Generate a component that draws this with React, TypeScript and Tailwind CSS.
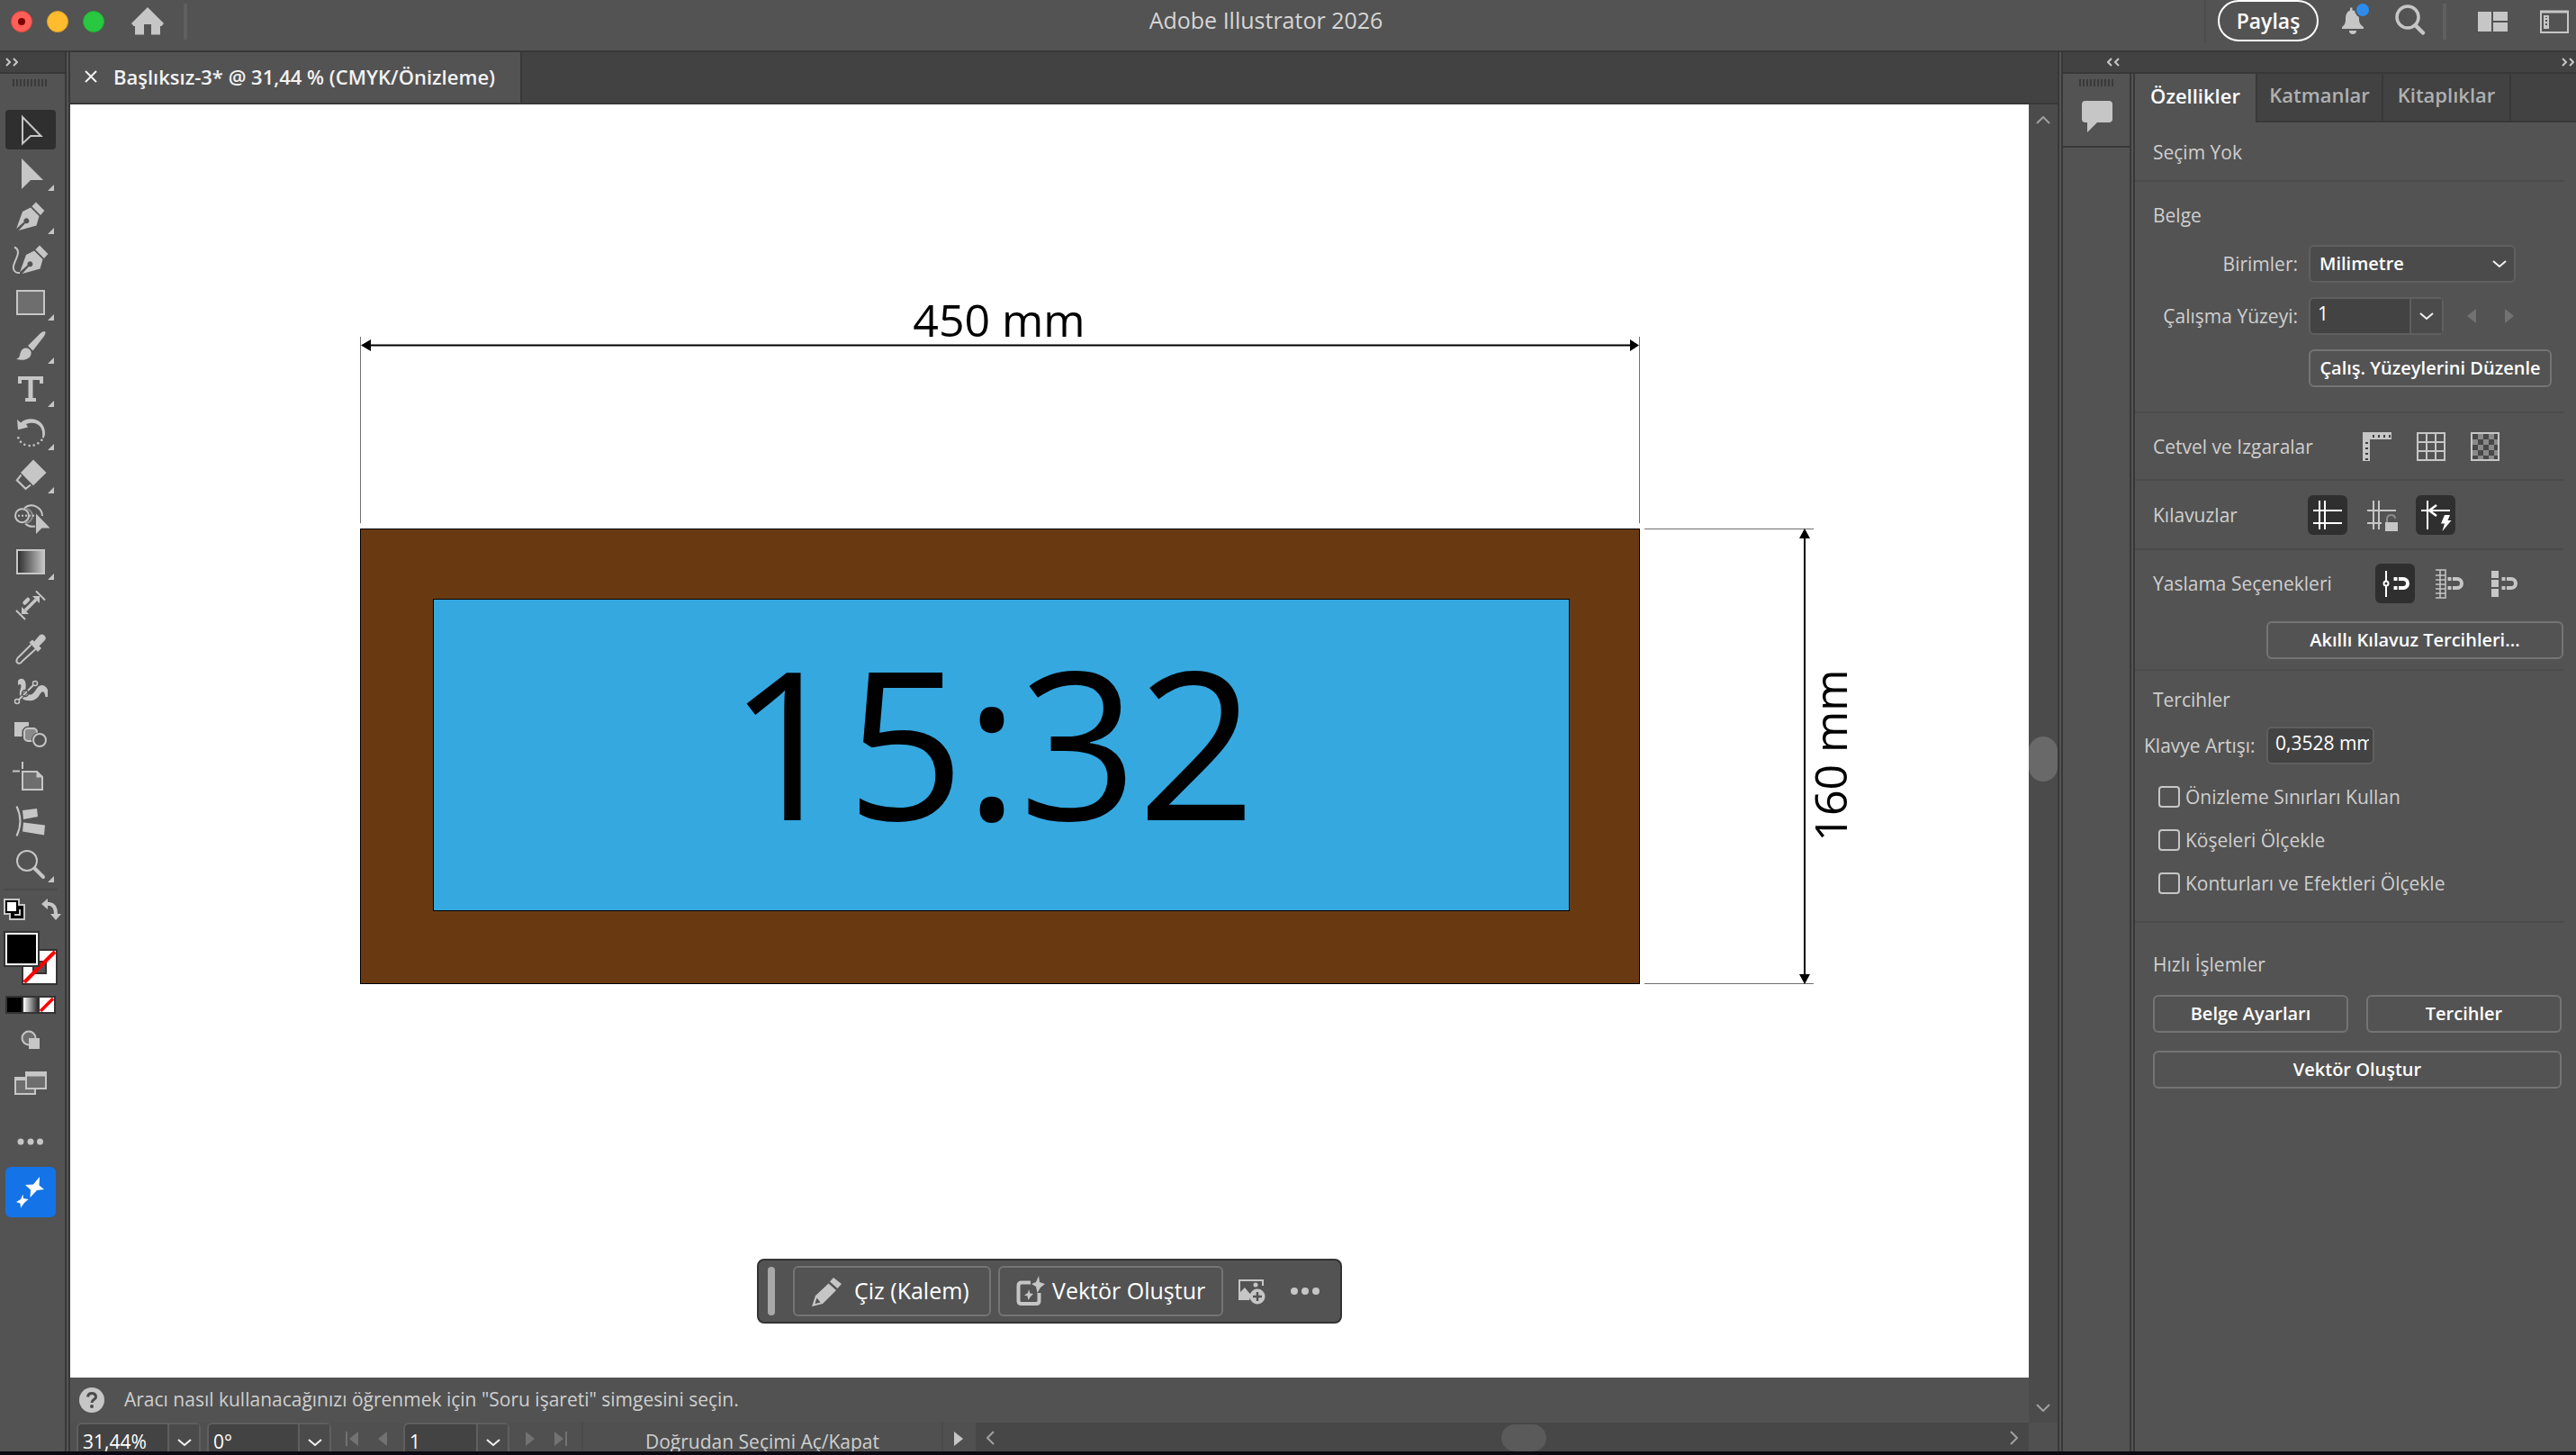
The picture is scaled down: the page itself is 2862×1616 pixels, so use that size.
import type { ReactNode } from 'react';

type Tool = { name: string; icon: ReactNode; more?: boolean; active?: boolean };

// every icon is drawn in the 72x48 cell of its button
const tools: Tool[] = [
  {
    name: 'Seçim',
    active: true,
    icon: <path d="M25 10V39.5L34 31H45.5Z" fill="none" stroke="#c6c6c6" strokeWidth="2" />,
  },
  { name: 'Doğrudan Seçim', more: true, icon: <path d="M24 8V42L34 32H48Z" /> },
  {
    name: 'Kalem',
    more: true,
    icon: (
      <g>
        <path d="M40 8.5 49.3 18 45 23 35.3 13.3Z" />
        <path d="M34 14.5 43.5 24 40.5 34.5 20.7 40 28 32A3 3 0 1 0 26.6 30.4L18.2 38 25 19Z" />
      </g>
    ),
  },
  {
    name: 'Eğrilik',
    icon: (
      <g>
        <path d="M44 8.5 53.3 18 49 23 39.3 13.3Z" />
        <path d="M38 14.5 47.5 24 44.5 34.5 24.7 40 32 32A3 3 0 1 0 30.6 30.4L22.2 38 29 19Z" />
        <path d="M16 10.5C26 15 14 27 14.8 33.5 15.4 38 18 39.4 22 39" fill="none" stroke="#c6c6c6" strokeWidth="2" />
      </g>
    ),
  },
  {
    name: 'Dikdörtgen',
    more: true,
    icon: <rect x="19" y="11" width="30" height="26" fill="#6e6e6e" stroke="#c6c6c6" strokeWidth="2" />,
  },
  {
    name: 'Boya Fırçası',
    more: true,
    icon: (
      <g>
        <path d="M49 8C51.5 8.2 50.5 11 48.5 14L36.5 29.5 31 24 44 11C46 9 47.5 8 49 8Z" />
        <path d="M29 26.5C33 27 35.5 30 34.5 33.5 33 40 24 41 18 38.8 22.5 37.5 21.5 34.5 23 31 24 28 26 26.5 29 26.5Z" />
      </g>
    ),
  },
  { name: 'Metin', more: true, icon: <path d="M20 10H48V18H44V14H36.5V34H40V38H28V34H31.5V14H24V18H20Z" /> },
  {
    name: 'Döndür',
    more: true,
    icon: (
      <g>
        <path d="M19 10 23 13.5C33 5 50 10 50 25 50 28 49 29.5 48.5 30.5L47 30C49 18 41 10.5 29 15L31 18.5 20 21.3Z" />
        <circle cx="20.3" cy="30.3" r="1.3" />
        <circle cx="23" cy="34.7" r="1.3" />
        <circle cx="27.3" cy="37.7" r="1.3" />
        <circle cx="32.7" cy="39" r="1.3" />
        <circle cx="37.7" cy="38.5" r="1.3" />
        <circle cx="42.3" cy="36.3" r="1.3" />
        <circle cx="46.3" cy="32.7" r="1.3" />
      </g>
    ),
  },
  {
    name: 'Silgi',
    more: true,
    icon: (
      <g>
        <path d="M37 6.5 51.5 21 37 35.2 23 21Z" />
        <path d="M23.5 23.5 18.8 29.3 28.5 38.8 34 34.5" fill="none" stroke="#c6c6c6" strokeWidth="2" />
      </g>
    ),
  },
  {
    name: 'Şekil Oluşturucu',
    icon: (
      <g>
        <circle cx="24.5" cy="20.7" r="7.5" fill="none" stroke="#c6c6c6" strokeWidth="2" />
        <path d="M27 12.5A12 12 0 0 1 47 21M28 29.5A12 12 0 0 0 39 32.5" fill="none" stroke="#c6c6c6" strokeWidth="2" />
        <path d="M28 13A8 8 0 0 1 28 29" fill="none" stroke="#8c8c8c" strokeWidth="2" />
        <path d="M20 20.7H40" stroke="#c6c6c6" strokeWidth="2" strokeDasharray="2 2" />
        <path d="M40 18.5V41L46.5 34.5H55.5Z" />
      </g>
    ),
  },
  {
    name: 'Degrade',
    more: true,
    icon: <rect x="19" y="11" width="30" height="26" fill="url(#toolGradient)" stroke="#c6c6c6" strokeWidth="2" />,
  },
  {
    name: 'Boyut',
    icon: (
      <g>
        <path d="M18 30 28 40M40 8.5 50 18.5" stroke="#c6c6c6" strokeWidth="2" />
        <path d="M28 30 40 18" stroke="#c6c6c6" strokeWidth="3.5" />
        <path d="M24 26V34H32ZM36 14H44V22Z" />
        <path d="M27.5 21.5 31 18" stroke="#c6c6c6" strokeWidth="4.5" strokeLinecap="round" />
      </g>
    ),
  },
  {
    name: 'Damlalık',
    icon: (
      <g>
        <path d="M32.5 17.5 36 14.5 38 16.5 43.5 10A4 4 0 0 1 49.5 15.5L43.5 21.5 46 24 42 28Z" />
        <path d="M34.5 20 22 32.5C20 34 18 36.5 18.5 39 20 42 23.5 41 24.5 38.5L39.5 25" fill="none" stroke="#c6c6c6" strokeWidth="2" />
      </g>
    ),
  },
  {
    name: 'Kukla Çarpıtma',
    icon: (
      <g>
        <path d="M20 12C23 8 28 10 28.5 15 29 19 28 22 29 25 33 30 37 27 40 22 44 15 50 16 53 22V30H50.5C50 25 48 22 45 26 42 32 37 35 32 34 24 34 20 29 22.5 22 24 18 24 14 20 17Z" />
        <path d="M20 34 38 16" stroke="#535353" strokeWidth="4" />
        <path d="M21 33 37 17" stroke="#c6c6c6" strokeWidth="2" />
        <circle cx="19" cy="35" r="2.5" fill="#535353" stroke="#c6c6c6" strokeWidth="1.5" />
        <circle cx="39" cy="15" r="2.5" fill="#535353" stroke="#c6c6c6" strokeWidth="1.5" />
        <circle cx="28" cy="26" r="3.5" fill="none" stroke="#535353" strokeWidth="1.5" />
      </g>
    ),
  },
  {
    name: 'Karışım',
    icon: (
      <g>
        <rect x="16" y="10" width="16" height="16" />
        <rect x="27" y="17" width="14" height="14" rx="4" fill="#8a8a8a" stroke="#535353" strokeWidth="5" />
        <rect x="27" y="17" width="14" height="14" rx="4" fill="#8a8a8a" stroke="#c6c6c6" strokeWidth="2" />
        <circle cx="44" cy="30" r="9" fill="#535353" />
        <circle cx="44" cy="30" r="7" fill="#535353" stroke="#c6c6c6" strokeWidth="2" />
      </g>
    ),
  },
  {
    name: 'Çalışma Yüzeyi',
    icon: (
      <g>
        <path d="M25 6V14M14 16.5H22" stroke="#c6c6c6" strokeWidth="2" />
        <path d="M25 17H41L47 23V37H25Z" fill="#6e6e6e" stroke="#c6c6c6" strokeWidth="2" />
        <path d="M40.5 17V23.5H47Z" />
      </g>
    ),
  },
  {
    name: 'Çalışma Yüzeyi Yerleşimi',
    icon: (
      <g>
        <path d="M18.5 7.5C23.5 18 23.5 30 18.5 40.5" fill="none" stroke="#c6c6c6" strokeWidth="2" />
        <path d="M25 12 41 10 42 19 26 22ZM26 25.5 50 28.5 49 39.5 25 35.5Z" />
      </g>
    ),
  },
  {
    name: 'Yakınlaştırma',
    more: true,
    icon: (
      <g fill="none" stroke="#c6c6c6">
        <circle cx="30" cy="20" r="11" strokeWidth="2" />
        <path d="M38.5 28.5 48 38" strokeWidth="4" strokeLinecap="round" />
      </g>
    ),
  },
];

const scaleOptions = ['Önizleme Sınırları Kullan', 'Köşeleri Ölçekle', 'Konturları ve Efektleri Ölçekle'];

function Grip() {
  return (
    <svg width="38" height="8" aria-hidden="true">
      <path d="M0 4H38" stroke="#3a3a3a" strokeWidth="8" strokeDasharray="2 2" />
    </svg>
  );
}

function Chevrons({ left = false }: { left?: boolean }) {
  return (
    <svg width="14" height="10" fill="none" stroke="#c6c6c6" strokeWidth="2" aria-hidden="true">
      {left ? <path d="M5 1 1 5 5 9M13 1 9 5 13 9" /> : <path d="M1 1 5 5 1 9M9 1 13 5 9 9" />}
    </svg>
  );
}

function Chevron({ className = '' }: { className?: string }) {
  return (
    <svg width="16" height="9" fill="none" stroke="#f2f2f2" strokeWidth="2" className={className} aria-hidden="true">
      <path d="M1 1 8 7 15 1" />
    </svg>
  );
}

function Triangle({ left = false, bar = false, bright = false }: { left?: boolean; bar?: boolean; bright?: boolean }) {
  return (
    <svg width="16" height="18" fill={bright ? '#c6c6c6' : '#727272'} aria-hidden="true">
      <path d={left ? 'M14 1V17L4 9Z' : 'M2 1V17L12 9Z'} />
      {bar && <rect x={left ? 0 : 14} y="1" width="2" height="16" />}
    </svg>
  );
}

function IconButton({ label, active = false, children }: { label: string; active?: boolean; children: ReactNode }) {
  return (
    <button aria-label={label} className={`h-11 w-11 rounded-md ${active ? 'bg-[#2f2f2f]' : ''}`}>
      <svg width="44" height="44" fill="none" stroke={active ? '#ffffff' : '#c6c6c6'} strokeWidth="2">
        {children}
      </svg>
    </button>
  );
}

function PanelButton({ children, className = '' }: { children: ReactNode; className?: string }) {
  return (
    <button
      className={`h-[42px] whitespace-nowrap rounded-md border-2 border-[#747474] text-[20px] font-semibold text-white ${className}`}
    >
      {children}
    </button>
  );
}

// number box with a drop-down button, cut off by the window's lower edge
function StatusField({ label, value, width }: { label: string; value: string; width: string }) {
  return (
    <div className={`flex h-8 rounded-t-md border-2 border-b-0 border-[#5f5f5f] bg-[#434343] ${width}`}>
      <input
        aria-label={label}
        defaultValue={value}
        className="mt-2 h-[22px] min-w-0 flex-1 pl-[5px] leading-[22px] text-white outline-none"
      />
      <button aria-label={`${label} listesi`} className="flex w-[35px] justify-center border-l-2 border-[#5f5f5f] bg-[#4b4b4b] pt-4">
        <Chevron />
      </button>
    </div>
  );
}

function TitleBar() {
  return (
    <header className="flex h-[58px] shrink-0 items-start border-b-2 border-[#383838]">
      <div className="flex h-12 items-center gap-4 pl-3">
        <button aria-label="Kapat" className="flex h-6 w-6 items-center justify-center rounded-full border border-[#e2463f] bg-[#ff5f57]">
          <span className="h-2 w-2 rounded-full bg-[#7a0000]" />
        </button>
        <button aria-label="Küçült" className="h-6 w-6 rounded-full border border-[#e0a028] bg-[#febc2e]" />
        <button aria-label="Büyüt" className="h-6 w-6 rounded-full border border-[#1fae34] bg-[#28c840]" />
        <button aria-label="Giriş" className="ml-3">
          <svg width="40" height="34" fill="#c6c6c6">
            <path d="M20 1 38 19 35.5 22H34V31.5H24V20H16V31.5H6V22H4.5L2 19Z" />
          </svg>
        </button>
        <span className="ml-1 h-10 w-1 bg-[#5f5f5f]" />
      </div>
      <h1 className="min-w-0 flex-1 pl-[156px] pt-1.5 text-center text-[25px] leading-8 text-[#d6d6d6]">Adobe Illustrator 2026</h1>
      <div className="flex h-12 items-center border-l-2 border-[#4b4b4b] pl-[13px] pr-2">
        <button className="mb-0.5 h-[46px] w-28 rounded-full border-2 border-white text-[23px] font-semibold text-white">Paylaş</button>
        <button aria-label="Bildirimler" className="ml-6">
          <svg width="34" height="44" fill="#c6c6c6">
            <path d="M11 6.5H13.5V9.5C19 10 21 14 21 19 21 23 22 25 26 28V30H2V28C5.5 25 6 23 6 19 6 14 8 10.5 11 9.5Z" />
            <path d="M10 32H18A4 4 0 0 1 10 32Z" />
            <circle cx="25" cy="9" r="9" fill="#535353" />
            <circle cx="25" cy="9" r="7" fill="#2d8ceb" />
          </svg>
        </button>
        <button aria-label="Ara" className="ml-6">
          <svg width="40" height="44" fill="none" stroke="#c6c6c6">
            <circle cx="17" cy="17" r="12" strokeWidth="3.5" />
            <path d="M25.5 26 34 34.5" strokeWidth="4.5" strokeLinecap="round" />
          </svg>
        </button>
        <span className="ml-4 mr-[34px] h-10 w-1 bg-[#5f5f5f]" />
        <button aria-label="Çalışma alanı">
          <svg width="34" height="24" fill="#c6c6c6">
            <path d="M1 1H16V23H1ZM18 1H34V11H18ZM18 13H34V23H18Z" />
          </svg>
        </button>
        <button aria-label="Paneller" className="ml-9">
          <svg width="32" height="28" fill="none" stroke="#c6c6c6" strokeWidth="2">
            <path d="M1 3H31V26H1Z" />
            <path d="M0 3H32" strokeWidth="3" />
            <rect x="5" y="8" width="4" height="13" />
            <path d="M7 10V20" strokeDasharray="2 2" />
          </svg>
        </button>
      </div>
    </header>
  );
}

function Toolbar() {
  return (
    <aside className="w-[74px] shrink-0 border-r-2 border-[#383838]">
      <div className="flex h-6 items-start border-b-2 border-[#383838] bg-[#424242] pl-[6px] pt-[6px]">
        <Chevrons />
      </div>
      <div className="flex h-[38px] pl-[14px] pt-[6px]">
        <Grip />
      </div>
      {tools.map((tool) => (
        <button key={tool.name} aria-label={tool.name} className="block h-12 w-[72px]">
          <svg width="72" height="48" fill="#c6c6c6">
            <defs>
              <linearGradient id="toolGradient">
                <stop offset="0" stopColor="#2b2b2b" />
                <stop offset="1" stopColor="#c6c6c6" />
              </linearGradient>
            </defs>
            {tool.active && <rect x="6" y="2" width="56" height="44" rx="4" fill="#2f2f2f" />}
            {tool.icon}
            {tool.more && <path d="M60 37V44H53Z" />}
          </svg>
        </button>
      ))}
      <div className="ml-1 mt-[3px] h-0.5 w-[60px] bg-[#4a4a4a]" />
      <button aria-label="Dolgu ve kontur" className="block">
        <svg width="72" height="143">
          <defs>
            <linearGradient id="swatchGradient">
              <stop offset="0" stopColor="#fff" />
              <stop offset="1" stopColor="#3a3a3a" />
            </linearGradient>
          </defs>
          <path d="M4 9H22V15H28V33H10V27H4Z" fill="#c6c6c6" />
          <path d="M20 17H26V31H12V25H20Z" fill="#000" />
          <path d="M22 21V27H16" fill="none" stroke="#c6c6c6" strokeWidth="2" />
          <rect x="7" y="12" width="12" height="12" fill="#fff" stroke="#000" strokeWidth="2" />
          <path d="M52 15H55Q62 16 62 26" fill="none" stroke="#c6c6c6" strokeWidth="4" />
          <path d="M46 15 53 9V21ZM56 26H68L62 33Z" fill="#c6c6c6" />
          <rect x="25" y="66" width="38" height="38" fill="#fff" stroke="#333" strokeWidth="2" />
          <rect x="37" y="79" width="14" height="13" fill="#535353" stroke="#333" strokeWidth="2" />
          <path d="M27 102 61 68" stroke="#f00" strokeWidth="4" />
          <rect x="5" y="46" width="38" height="38" fill="#fff" stroke="#333" strokeWidth="2" />
          <rect x="8" y="49" width="32" height="32" />
          <rect x="6" y="117" width="56" height="20" fill="#333" />
          <rect x="8" y="119" width="16" height="16" />
          <rect x="26" y="119" width="15" height="16" fill="url(#swatchGradient)" />
          <rect x="44" y="119" width="16" height="16" fill="#fff" />
          <path d="M45 134 59 120" stroke="#f00" strokeWidth="3.5" />
        </svg>
      </button>
      <button aria-label="Çizim modu" className="block">
        <svg width="72" height="48">
          <circle cx="32" cy="21" r="7.5" fill="#6e6e6e" stroke="#c6c6c6" strokeWidth="2" />
          <rect x="32" y="21" width="12" height="12" fill="#c6c6c6" />
        </svg>
      </button>
      <button aria-label="Ekran modu" className="block">
        <svg width="72" height="60" fill="#6e6e6e" stroke="#c6c6c6" strokeWidth="2">
          <path d="M17 17H39V35H17ZM17 19H39" />
          <path d="M29 11H51V29H29Z" />
          <path d="M28 13H52" strokeWidth="5" />
        </svg>
      </button>
      <button aria-label="Araç çubuğunu düzenle" className="block">
        <svg width="72" height="56" fill="#c6c6c6">
          <circle cx="23" cy="28" r="3.5" />
          <circle cx="34" cy="28" r="3.5" />
          <circle cx="44.5" cy="28" r="3.5" />
        </svg>
      </button>
      <button aria-label="Üretken yapay zeka" className="ml-1.5 block rounded-md bg-[#1473e6]">
        <svg width="56" height="56" fill="#fff">
          <path d="M38 11 37.5 20.5 43 25 35 26 27.5 34 28 25.5 22 20 31 19.5Z" />
          <path d="M19.5 30.5 20 35 25.5 36 21 40 17 45.5 16.5 40.5 12 39 17 36Z" />
        </svg>
      </button>
    </aside>
  );
}

function Artwork() {
  return (
    <svg viewBox="0 0 2176 1414" className="absolute inset-0 h-full w-full" role="img" aria-label="Saat çizimi">
      <path d="M322.5 258V465M1743.5 258V465M1749 471.5H1937M1749 976.5H1937" stroke="#707070" />
      <path d="M328 267.5H1738M1927 477V971" stroke="#000" strokeWidth="2" />
      <path d="M323 267.5 334 261V274ZM1743 267.5 1733 261V274ZM1927 471 1921 482H1933ZM1927 977 1921 966H1933Z" />
      <rect x="322.5" y="471.500" width="1421" height="505" fill="#693a11" stroke="#000" />
      <rect x="403.500" y="549.500" width="1262" height="346" fill="#35a8e0" stroke="#000" />
      <text x="1032" y="258" textAnchor="middle" className="font-['Open_Sans',sans-serif] text-[50px]">
        450 mm
      </text>
      <text transform="translate(1974 723) rotate(-90)" textAnchor="middle" className="font-['Open_Sans',sans-serif] text-[50px]">
        160 mm
      </text>
      <text x="1024" y="795" textAnchor="middle" className="font-['Open_Sans',sans-serif] text-[230px]">
        15:32
      </text>
    </svg>
  );
}

function ContextBar() {
  return (
    <div className="absolute bottom-[60px] left-1/2 flex h-[72px] -translate-x-1/2 items-center rounded-lg border-2 border-[#333333] bg-[#535353] pl-2.5 pr-[22px] text-[25px] text-white">
      <span className="mr-5 h-[54px] w-2 rounded-full bg-[#a8a8a8]" />
      <button className="mr-2 flex h-14 w-[220px] items-center rounded-md border-2 border-[#747474] pl-[18px]">
        <svg width="36" height="34" fill="#c6c6c6" className="mr-3" aria-hidden="true">
          <path d="M25 2 34 9 29.5 14 21 6.5ZM19.5 8.5 28 16 13 31 1 34 5 22ZM6.5 24.5 4.5 31 10.5 29.5Z" fillRule="evenodd" />
        </svg>
        Çiz (Kalem)
      </button>
      <button className="mr-4 flex h-14 w-[250px] items-center rounded-md border-2 border-[#747474] pl-[18px]">
        <svg width="32" height="34" fill="#c6c6c6" className="mr-2" aria-hidden="true">
          <path d="M16 7.5H6Q2.500 7.500 2.500 11V28Q2.500 31 6 31H22Q25.500 31 25.500 28V19" fill="none" stroke="#c6c6c6" strokeWidth="4" />
          <path d="M25 0 26 7 32 9 27 13 23.5 19 22 12 17 9 22 7ZM14 15 15.5 19.5 19 20 16 23 13.5 27 12.5 22.5 9 21.5 13 19Z" />
        </svg>
        Vektör Oluştur
      </button>
      <button aria-label="Görüntü ekle" className="mr-[26px]">
        <svg width="32" height="32" fill="#c6c6c6">
          <path d="M28 10V4H2V25H13" fill="none" stroke="#c6c6c6" strokeWidth="2" />
          <path d="M2 25V18L8 12 12 17 15 20 13 26H2Z" />
          <circle cx="20" cy="9" r="2.5" />
          <circle cx="22" cy="22" r="8.5" />
          <path d="M22 17V27M17 22H27" stroke="#535353" strokeWidth="2.5" />
        </svg>
      </button>
      <button aria-label="Diğer seçenekler">
        <svg width="34" height="10" fill="#c6c6c6">
          <circle cx="5" cy="5" r="4" />
          <circle cx="17" cy="5" r="4" />
          <circle cx="29" cy="5" r="4" />
        </svg>
      </button>
    </div>
  );
}

function Document() {
  return (
    <main className="ml-0.5 flex min-w-0 flex-1 flex-col border-x-2 border-[#383838]">
      <div className="flex h-[58px] shrink-0 border-b-2 border-[#383838] bg-[#424242]">
        <div className="flex items-center border-r-2 border-[#383838] bg-[#535353] pb-0.5 pl-4 pr-7">
          <button aria-label="Belgeyi kapat" className="mr-[18px]">
            <svg width="14" height="14" stroke="#f2f2f2" strokeWidth="2">
              <path d="M1 1 13 13M13 1 1 13" />
            </svg>
          </button>
          <span className="text-[22px] font-semibold leading-8 text-[#f2f2f2]">Başlıksız-3* @ 31,44 % (CMYK/Önizleme)</span>
        </div>
      </div>

      <div className="flex min-h-0 flex-1">
        <div className="flex min-w-0 flex-1 flex-col">
          <div className="relative min-h-0 flex-1 bg-white">
            <Artwork />
            <ContextBar />
          </div>
          <div className="flex h-[50px] shrink-0 items-center gap-[22px] bg-[#525252] pl-[10px]">
            <svg width="28" height="28" fill="none" aria-hidden="true">
              <circle cx="14" cy="14" r="14" fill="#c6c6c6" />
              <path d="M9.5 10.5Q10 6.5 14 6.5 18.5 6.5 18.5 10.5C18.5 13.5 14 13 14 17" stroke="#4b4b4b" strokeWidth="3" />
              <circle cx="14" cy="21" r="2" fill="#4b4b4b" />
            </svg>
            <p>Aracı nasıl kullanacağınızı öğrenmek için "Soru işareti" simgesini seçin.</p>
          </div>
        </div>
        <div className="flex w-8 shrink-0 flex-col items-center justify-between bg-[#4b4b4b] pb-[12px] pt-[13px]">
          <svg width="16" height="9" fill="none" stroke="#a0a0a0" strokeWidth="2" aria-hidden="true">
            <path d="M1 8 8 1 15 8" />
          </svg>
          <span className="mb-3 h-[50px] w-8 rounded-full bg-[#696969]" />
          <svg width="16" height="9" fill="none" stroke="#a0a0a0" strokeWidth="2" aria-hidden="true">
            <path d="M1 1 8 8 15 1" />
          </svg>
        </div>
      </div>

      <footer className="flex h-8 shrink-0 bg-[#505050]">
        <div className="flex gap-[7px] pl-[7px]">
          <StatusField label="Yakınlaştırma" value="31,44%" width="w-[138px]" />
          <StatusField label="Döndürme" value="0°" width="w-[138px]" />
        </div>
        <div className="flex items-start gap-4 px-4 pt-[9px]">
          <button aria-label="İlk">
            <Triangle left bar />
          </button>
          <button aria-label="Önceki">
            <Triangle left />
          </button>
        </div>
        <StatusField label="Çalışma yüzeyi" value="1" width="w-[118px]" />
        <div className="flex items-start gap-4 px-4 pt-[9px]">
          <button aria-label="Sonraki">
            <Triangle />
          </button>
          <button aria-label="Son">
            <Triangle bar />
          </button>
        </div>
        <p className="w-[402px] border-x-2 border-[#4a4a4a] pt-2.5 text-center leading-[22px]">Doğrudan Seçimi Aç/Kapat</p>
        <button aria-label="Durum menüsü" className="flex w-9 items-start justify-center pt-[9px]">
          <Triangle bright />
        </button>
        <div className="flex min-w-0 flex-1 items-start justify-between bg-[#474747] px-3">
          <svg width="9" height="16" fill="none" stroke="#a0a0a0" strokeWidth="2" className="mt-[9px]" aria-hidden="true">
            <path d="M8 1 1 8 8 15" />
          </svg>
          <span className="ml-12 mt-0.5 h-[30px] w-[50px] rounded-full bg-[#5a5a5a]" />
          <svg width="9" height="16" fill="none" stroke="#a0a0a0" strokeWidth="2" className="mt-[9px]" aria-hidden="true">
            <path d="M1 1 8 8 1 15" />
          </svg>
        </div>
        <div className="w-8" />
      </footer>
    </main>
  );
}

function Section({ children, className = '' }: { children: ReactNode; className?: string }) {
  return <section className={`mr-[14px] border-b-2 border-[#4b4b4b] pl-5 ${className}`}>{children}</section>;
}

function Magnet() {
  return (
    <g>
      <path d="M26 17H31A4.5 4.5 0 0 1 31 27H26" strokeWidth="4" />
      <path d="M20.5 17H24.5M20.5 27H24.5" strokeWidth="4" />
    </g>
  );
}

function Properties() {
  return (
    <div className="flex min-w-0 flex-1 flex-col leading-[30px]">
      <nav className="flex h-[54px] bg-[#424242] text-[22px] font-semibold text-[#b0b0b0]">
        <button className="w-[134px] bg-[#535353] pb-1.5 text-white">Özellikler</button>
        <button className="w-[142px] border-x-2 border-b-2 border-[#383838] pb-1.5">Katmanlar</button>
        <button className="w-[142px] border-b-2 border-r-2 border-[#383838] pb-1.5">Kitaplıklar</button>
        <div className="flex-1 border-b-2 border-[#383838]" />
      </nav>

      <Section className="pb-4 pt-[18px]">
        <p>Seçim Yok</p>
      </Section>

      <Section className="pb-[27px] pt-[22px]">
        <h2>Belge</h2>
        <div className="mt-[18px] grid grid-cols-[161px_1fr] items-center gap-x-3 gap-y-4">
          <label htmlFor="units" className="text-right">
            Birimler:
          </label>
          <div className="relative w-[230px]">
            <select
              id="units"
              className="block h-[42px] w-full appearance-none rounded-md border-2 border-[#5f5f5f] bg-[#4b4b4b] px-2.5 text-[20px] font-semibold text-white"
            >
              <option>Milimetre</option>
            </select>
            <Chevron className="pointer-events-none absolute right-[10px] top-[17px]" />
          </div>
          <label htmlFor="artboard" className="whitespace-nowrap text-right">
            Çalışma Yüzeyi:
          </label>
          <div className="flex items-center">
            <div className="flex h-[42px] w-[150px] rounded-md border-2 border-[#5f5f5f] bg-[#434343]">
              <input id="artboard" defaultValue="1" className="min-w-0 flex-1 pb-1.5 pl-2 text-white outline-none" />
              <button aria-label="Çalışma yüzeyi listesi" className="flex w-9 items-center justify-center border-l-2 border-[#5f5f5f] bg-[#4b4b4b]">
                <Chevron />
              </button>
            </div>
            <button aria-label="Önceki çalışma yüzeyi" className="ml-[22px]">
              <Triangle left />
            </button>
            <button aria-label="Sonraki çalışma yüzeyi" className="ml-7">
              <Triangle />
            </button>
          </div>
          <PanelButton className="col-start-2 w-[270px]">Çalış. Yüzeylerini Düzenle</PanelButton>
        </div>
      </Section>

      <Section className="flex items-center pb-[14px] pt-[15px]">
        <h2 className="w-[227px]">Cetvel ve Izgaralar</h2>
        <div className="flex gap-4">
          <IconButton label="Cetvel">
            <path d="M6 6H38V14H14V38H6Z" fill="#c6c6c6" stroke="none" />
            <path d="M17 10.5H37M10.5 17V37" stroke="#3f3f3f" strokeWidth="3" strokeDasharray="2 4" />
          </IconButton>
          <IconButton label="Izgara">
            <path d="M7 7H37V37H7ZM17 7V37M27 7V37M7 17H37M7 27H37" />
          </IconButton>
          <IconButton label="Saydamlık ızgarası">
            <rect x="7" y="7" width="30" height="30" fill="#484848" />
            <path d="M8 11H36M8 23H36M8 35H36" stroke="#8a8a8a" strokeWidth="6" strokeDasharray="6 6" strokeDashoffset="6" />
            <path d="M8 17H36M8 29H36" stroke="#8a8a8a" strokeWidth="6" strokeDasharray="6 6" />
            <rect x="7" y="7" width="30" height="30" />
          </IconButton>
        </div>
      </Section>

      <Section className="flex items-center pb-[15px] pt-4">
        <h2 className="w-[172px]">Kılavuzlar</h2>
        <div className="flex gap-4">
          <IconButton label="Kılavuzları göster" active>
            <path d="M13 6V38M19 6V38M6 17H38M6 31H38" />
          </IconButton>
          <IconButton label="Kılavuzları kilitle">
            <path d="M13 6V38M19 6V38M6 17H38M6 31H22" />
            <path d="M28 30V27Q28 22 32.5 22 37 22 37 26" stroke="#8c8c8c" />
            <rect x="26" y="30" width="14" height="10" fill="#c6c6c6" stroke="none" />
          </IconButton>
          <IconButton label="Akıllı kılavuzlar" active>
            <path d="M13 6V38M6 17H38" />
            <path d="M23 11 15 17 23 23" strokeWidth="2.5" />
            <path d="M32 22H38L35.5 28H39.5L29.5 40 32 31.5H28Z" fill="#fff" stroke="none" />
          </IconButton>
        </div>
      </Section>

      <Section className="pb-[11px] pt-[15px]">
        <div className="flex items-center">
          <h2 className="w-[247px]">Yaslama Seçenekleri</h2>
          <div className="flex gap-4">
            <IconButton label="Noktaya yasla" active>
              <path d="M12 8V19M12 25V37" />
              <circle cx="12" cy="22" r="2.5" />
              <Magnet />
            </IconButton>
            <IconButton label="Izgaraya yasla">
              <path d="M7 7H18V38H7M12 7V38M7 13H18M7 18H18M7 23H18M7 28H18M7 33H18" strokeWidth="1.5" />
              <Magnet />
            </IconButton>
            <IconButton label="Piksele yasla">
              <path d="M9 8H17V16H9ZM9 18H17V26H9ZM9 28H17V37H9Z" fill="#c6c6c6" stroke="none" />
              <Magnet />
            </IconButton>
          </div>
        </div>
        <PanelButton className="ml-[126px] mt-5 w-[330px]">Akıllı Kılavuz Tercihleri...</PanelButton>
      </Section>

      <Section className="pb-[18px] pt-[17px]">
        <h2>Tercihler</h2>
        <div className="mt-[15px] flex items-center">
          <label htmlFor="increment" className="-ml-[10px] w-[136px] whitespace-nowrap">
            Klavye Artışı:
          </label>
          <input
            id="increment"
            defaultValue="0,3528 mm"
            className="h-[42px] w-[120px] rounded-md border-2 border-[#5f5f5f] bg-[#434343] pb-1.5 pl-2 pr-1 text-white outline-none"
          />
        </div>
        <div className="mt-3">
          {scaleOptions.map((option) => (
            <label key={option} className="flex h-12 items-center gap-1.5 pl-1.5">
              <input type="checkbox" className="h-6 w-6 appearance-none rounded-[4px] border-2 border-[#c6c6c6]" />
              {option}
            </label>
          ))}
        </div>
      </Section>

      <section className="pl-5 pr-4 pt-[31px]">
        <h2>Hızlı İşlemler</h2>
        <div className="mt-[19px] grid grid-cols-2 gap-5">
          <PanelButton>Belge Ayarları</PanelButton>
          <PanelButton>Tercihler</PanelButton>
          <PanelButton className="col-span-2">Vektör Oluştur</PanelButton>
        </div>
      </section>
    </div>
  );
}

function Dock() {
  return (
    <aside className="ml-0.5 flex w-[572px] shrink-0 flex-col border-l-2 border-[#383838]">
      <div className="flex h-6 shrink-0 items-start justify-between border-b-2 border-[#383838] bg-[#424242] pl-[49px] pr-0.5 pt-[6px]">
        <Chevrons left />
        <Chevrons />
      </div>
      <div className="flex min-h-0 flex-1">
        <div className="w-[76px] shrink-0 border-r-2 border-[#383838]">
          <div className="flex h-[82px] flex-col items-center border-b-2 border-[#383838] pt-[6px]">
            <Grip />
            <button aria-label="Yorumlar" className="ml-0.5 mt-4">
              <svg width="34" height="36" fill="#c6c6c6">
                <path d="M4 0H30Q34 0 34 4V20Q34 24 30 24H17L6 35V24H4Q0 24 0 20V4Q0 0 4 0Z" />
              </svg>
            </button>
          </div>
        </div>
        <div className="ml-0.5 flex min-w-0 flex-1 border-l-2 border-[#383838]">
          <Properties />
        </div>
      </div>
    </aside>
  );
}

export default function App() {
  return (
    <div className="flex h-screen flex-col overflow-hidden border-b-4 border-[#0b0912] bg-[#535353] font-['Open_Sans','Noto_Sans',sans-serif] text-[21px] text-[#cfcfcf]">
      <TitleBar />
      <div className="flex min-h-0 flex-1">
        <Toolbar />
        <Document />
        <Dock />
      </div>
    </div>
  );
}
